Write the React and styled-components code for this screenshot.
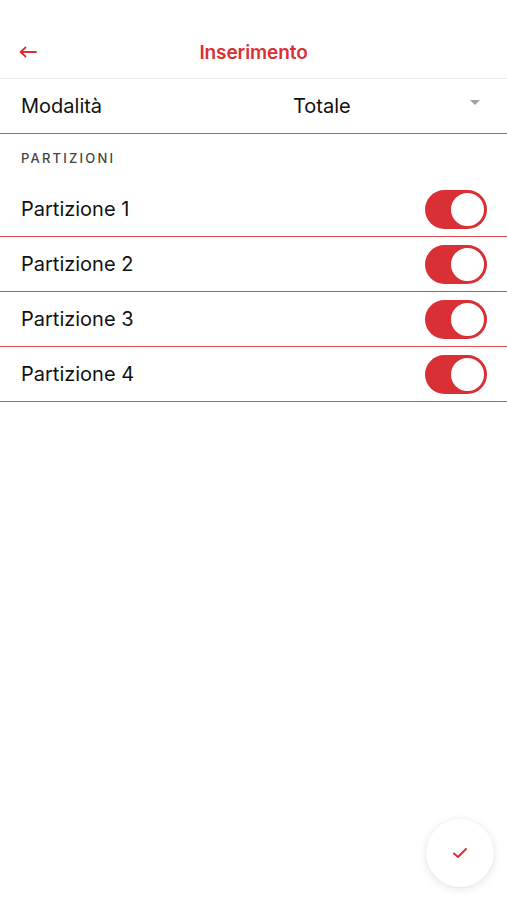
import React, { useState } from 'react';
import styled, { createGlobalStyle } from 'styled-components';

const RED = '#d93035';

const GlobalStyle = createGlobalStyle`
  html, body {
    margin: 0;
    padding: 0;
    background: #fff;
  }
  body {
    font-family: Inter, "Noto Sans", "Liberation Sans", sans-serif;
    color: #111;
  }
`;

const Screen = styled.div`
  width: 507px;
  height: 900px;
  position: relative;
  background: #fff;
  overflow: hidden;
`;

const Header = styled.header`
  display: grid;
  grid-template-columns: 60px 1fr 60px;
  align-items: center;
  height: 52px;
  padding-top: 26px;
  border-bottom: 1px solid #ececec;
`;

const BackButton = styled.button`
  border: 0;
  background: none;
  padding: 0 0 0 19px;
  display: flex;
  align-items: center;
  color: ${RED};
  cursor: pointer;
`;

const Title = styled.h1`
  margin: 0;
  text-align: center;
  font-size: 19px;
  font-weight: 600;
  color: ${RED};
  letter-spacing: -0.1px;
`;

const SelectRow = styled.div`
  display: grid;
  grid-template-columns: 272px 1fr 40px;
  align-items: center;
  height: 54px;
  padding-left: 21px;
  border-bottom: 1px solid #e04a4f;
  font-size: 20px;
`;

const Caret = styled.span`
  justify-self: start;
  align-self: start;
  margin-top: 21px;
  margin-left: 3px;
  width: 0;
  height: 0;
  border-left: 5.5px solid transparent;
  border-right: 5.5px solid transparent;
  border-top: 5.5px solid #a0a0a0;
`;

const SectionLabel = styled.div`
  height: 48px;
  display: flex;
  align-items: center;
  padding-left: 21px;
  font-size: 13px;
  font-weight: 500;
  letter-spacing: 2.2px;
  color: #444;
`;

const Row = styled.div`
  display: flex;
  align-items: center;
  justify-content: space-between;
  height: 54px;
  padding: 0 20px 0 21px;
  border-bottom: 1px solid #e04a4f;
  font-size: 20px;
`;

const Toggle = styled.button`
  position: relative;
  width: 62px;
  height: 39px;
  border: 0;
  padding: 0;
  border-radius: 20px;
  background: ${(p) => (p.$on ? RED : '#e5e5e5')};
  cursor: pointer;
  transition: background 0.2s;
`;

const Knob = styled.span`
  position: absolute;
  top: 1px;
  left: ${(p) => (p.$on ? '24px' : '1px')};
  width: 37px;
  height: 37px;
  box-sizing: border-box;
  border-radius: 50%;
  background: #fff;
  border: 2px solid ${(p) => (p.$on ? RED : '#e5e5e5')};
  transition: left 0.2s;
`;

const Fab = styled.button`
  position: absolute;
  right: 13px;
  bottom: 13px;
  width: 68px;
  height: 68px;
  border-radius: 50%;
  border: 0;
  background: #fff;
  box-shadow: 0 2px 10px rgba(0, 0, 0, 0.1), 0 0 3px rgba(0, 0, 0, 0.05);
  display: flex;
  align-items: center;
  justify-content: center;
  cursor: pointer;
`;

const partitions = ['Partizione 1', 'Partizione 2', 'Partizione 3', 'Partizione 4'];

export default function App() {
  const [enabled, setEnabled] = useState([true, true, true, true]);

  const flip = (i) => {
    setEnabled((prev) => prev.map((v, j) => (j === i ? !v : v)));
  };

  return (
    <Screen>
      <GlobalStyle />
      <Header>
        <BackButton aria-label="Indietro">
          <svg width="18" height="12" viewBox="0 0 18 12" fill="none">
            <path d="M17 6H2M6.5 1.5L1.5 6l5 4.5" stroke={RED} strokeWidth="1.8" strokeLinecap="round" strokeLinejoin="round" />
          </svg>
        </BackButton>
        <Title>Inserimento</Title>
        <span />
      </Header>

      <SelectRow>
        <span>Modalità</span>
        <span>Totale</span>
        <Caret />
      </SelectRow>

      <SectionLabel>PARTIZIONI</SectionLabel>

      {partitions.map((name, i) => (
        <Row key={name}>
          <span>{name}</span>
          <Toggle $on={enabled[i]} onClick={() => flip(i)}>
            <Knob $on={enabled[i]} />
          </Toggle>
        </Row>
      ))}

      <Fab aria-label="Conferma">
        <svg width="16" height="12" viewBox="0 0 16 12" fill="none">
          <path d="M2 6.5l4 3.5 8-8" stroke={RED} strokeWidth="2" strokeLinecap="round" strokeLinejoin="round" />
        </svg>
      </Fab>
    </Screen>
  );
}
